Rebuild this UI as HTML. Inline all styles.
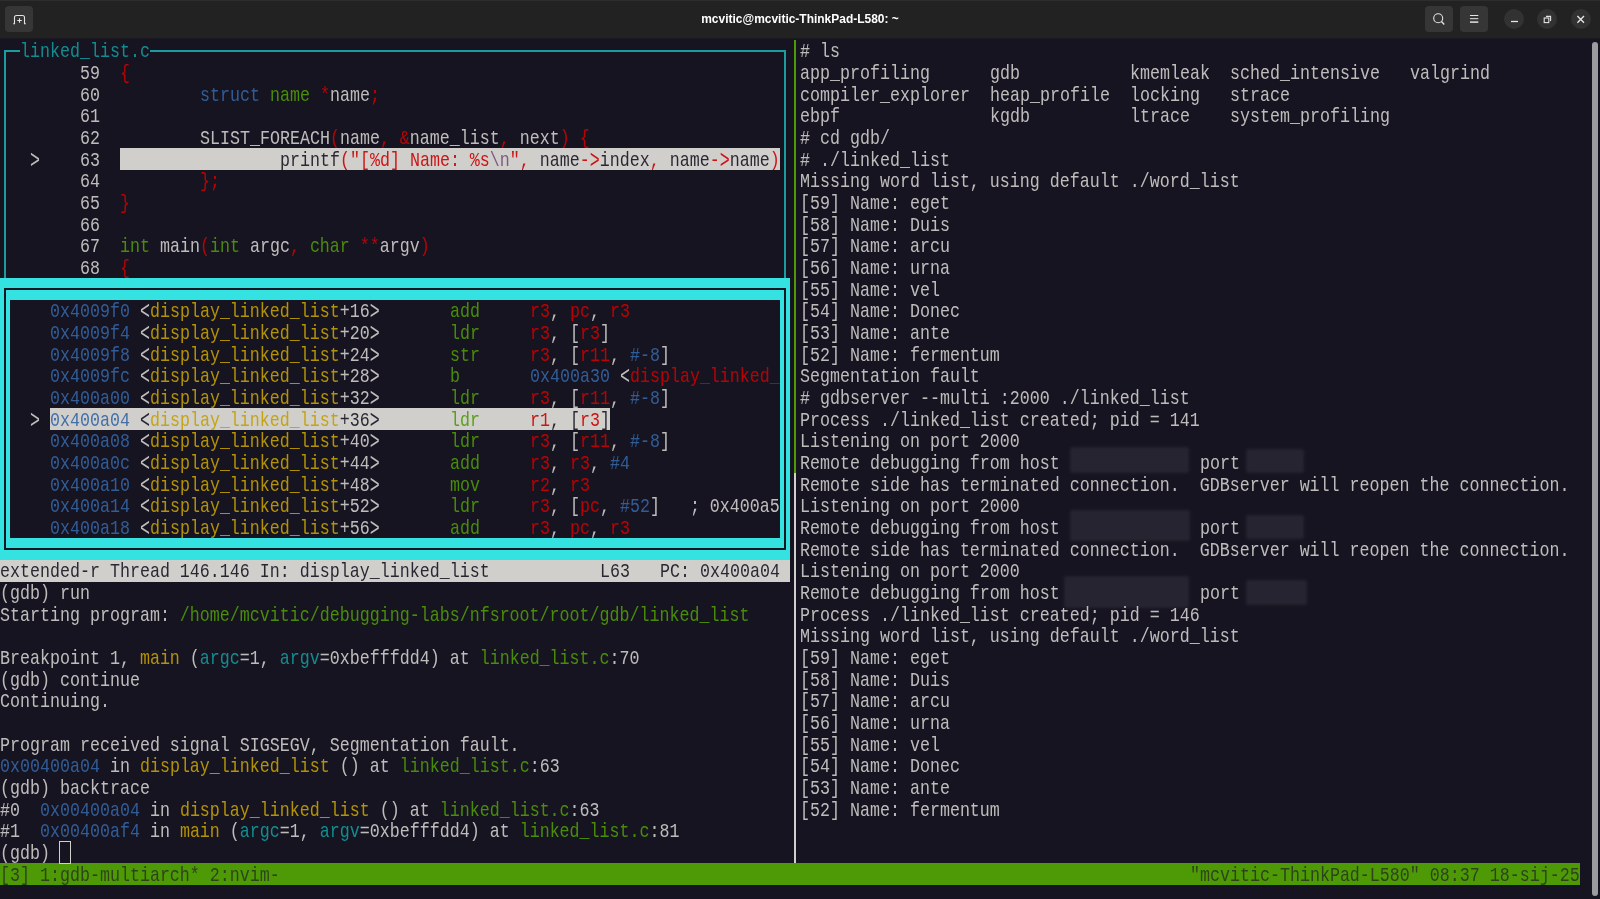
<!DOCTYPE html>
<html lang="en"><head><meta charset="utf-8"><title>mcvitic@mcvitic-ThinkPad-L580: ~</title>
<style>
html,body{margin:0;padding:0;width:1600px;height:899px;overflow:hidden;background:#171421}
body{position:relative;font-family:"Liberation Sans",sans-serif}
#tb{position:absolute;left:0;top:0;width:1600px;height:38px;background:#222222;border-top:1px solid #2d2d2d;box-sizing:border-box}
#ttl{position:absolute;left:0;top:-0.4px;width:1600px;height:38px;line-height:38px;text-align:center;color:#fff;font-weight:bold;font-size:12.7px;transform:scaleX(0.943)}
.btn{position:absolute;top:6px;height:26px;width:28px;border-radius:4px;background:#363636}
.cir{position:absolute;top:9px;width:20px;height:20px;border-radius:50%;background:#323232}
.ico{position:absolute;left:0;top:0}
.b{position:absolute}
#term{position:absolute;left:0;top:0;width:1933.755px;height:899px;transform-origin:0 0;transform:scale(0.827406,1.000000);font-family:"Liberation Mono", monospace;font-size:20.14px;color:#d0cfcc;opacity:.9}
.r{position:absolute;left:0;white-space:pre;height:21.6667px;line-height:21.6667px}
.ch{display:inline-block;transform:scaleY(1.3);transform-origin:50% 8.6px}
.blur{position:absolute;background:#282632;filter:blur(1.5px);border-radius:2px;opacity:.9}
</style></head><body>
<div id="tb"></div><div class="b" style="left:0;top:38px;width:1600px;height:1px;background:#1b1a20"></div>
<div id="ttl">mcvitic@mcvitic-ThinkPad-L580: ~</div>
<div class="btn" style="left:5px"></div>
<div class="btn" style="left:1425px"></div>
<div class="btn" style="left:1460px"></div>
<div class="cir" style="left:1504px"></div>
<div class="cir" style="left:1537px"></div>
<div class="cir" style="left:1571px"></div>
<svg class="ico" width="1600" height="38" viewBox="0 0 1600 38" fill="none" stroke="#e4e4e4" stroke-width="1.1">
<path d="M13.2 23.7h1.3v-6.2a2 2 0 0 1 2-2h6a2 2 0 0 1 2 2v6.2h1.3"/>
<path d="M19.5 18.2v4.6M17.2 20.5h4.6"/>
<circle cx="1438.2" cy="18.2" r="4.5" stroke-width="1.1"/><path d="M1441.5 21.5l2.7 2.9" stroke-width="1.4"/>
<path d="M1470 15.5h8.3M1470 18.7h8.3" stroke-width="1"/><path d="M1470 22.1h8.3" stroke-width="1.5"/>
<path d="M1511 21.5h7" stroke-width="1.3"/>
<rect x="1544.2" y="18" width="4.6" height="4.6" stroke-width="1.1"/><path d="M1546 16.4h4.6v4.6" stroke-width="1.1"/>
<path d="M1577.4 16.1l6.6 6.6M1584 16.1l-6.6 6.6" stroke-width="1.4"/>
</svg>
<div class="b" style="left:120px;top:148px;width:660px;height:22px;background:#d0cfcc"></div>
<div class="b" style="left:50px;top:408px;width:560px;height:22px;background:#d0cfcc"></div>
<div class="b" style="left:0px;top:560px;width:790px;height:22px;background:#d0cfcc"></div>
<div class="b" style="left:0px;top:863px;width:1580px;height:22px;background:#4e9a06"></div>
<div class="b" style="left:4px;top:50px;width:16px;height:2px;background:#1d9c9f"></div>
<div class="b" style="left:150px;top:50px;width:636px;height:2px;background:#1d9c9f"></div>
<div class="b" style="left:4px;top:50px;width:2px;height:228px;background:#1d9c9f"></div>
<div class="b" style="left:784px;top:50px;width:2px;height:228px;background:#1d9c9f"></div>
<div class="b" style="left:0;top:278px;width:790px;height:22px;background:#34e2e2"></div>
<div class="b" style="left:0;top:538px;width:790px;height:22px;background:#34e2e2"></div>
<div class="b" style="left:0;top:278px;width:10px;height:282px;background:#34e2e2"></div>
<div class="b" style="left:780px;top:278px;width:10px;height:282px;background:#34e2e2"></div>
<div class="b" style="left:4px;top:288px;width:782px;height:262px;border:2px solid #131722;box-sizing:border-box"></div>
<div class="b" style="left:794px;top:40px;width:2px;height:433px;background:#4e9a06"></div>
<div class="b" style="left:794.3px;top:473px;width:1.7px;height:390px;background:#d0cfcc"></div>
<div class="blur" style="left:1070px;top:447px;width:119px;height:26px"></div>
<div class="blur" style="left:1246px;top:449px;width:58px;height:24px"></div>
<div class="blur" style="left:1070px;top:510px;width:120px;height:31px"></div>
<div class="blur" style="left:1246px;top:515px;width:58px;height:24px"></div>
<div class="blur" style="left:1064px;top:576px;width:125px;height:32px"></div>
<div class="blur" style="left:1246px;top:580px;width:61px;height:25px"></div>
<div class="b" style="left:59px;top:841px;width:12px;height:23px;border:1px solid #d0cfcc;box-sizing:border-box"></div>
<div class="b" style="left:1592.4px;top:42px;width:5.4px;height:854px;border-radius:3px;background:#9c9ba0"></div>
<div id="term">
<div class="r" style="top:41.40px;left:24.172px"><span style="color:#129a9c">linked_list.c</span></div>
<div class="r" style="top:41.40px;left:966.877px"># ls</div>
<div class="r" style="top:63.07px;left:96.688px">59</div>
<div class="r" style="top:63.07px;left:145.032px"><span style="color:#cc0000">{</span></div>
<div class="r" style="top:63.07px;left:966.877px">app_profiling</div>
<div class="r" style="top:63.07px;left:1196.511px">gdb</div>
<div class="r" style="top:63.07px;left:1365.714px">kmemleak</div>
<div class="r" style="top:63.07px;left:1486.574px">sched_intensive</div>
<div class="r" style="top:63.07px;left:1704.121px">valgrind</div>
<div class="r" style="top:84.73px;left:96.688px">60</div>
<div class="r" style="top:84.73px;left:241.719px"><span style="color:#3465a4">struct</span> <span style="color:#4e9a06">name</span> <span style="color:#cc0000">*</span>name<span style="color:#cc0000">;</span></div>
<div class="r" style="top:84.73px;left:966.877px">compiler_explorer</div>
<div class="r" style="top:84.73px;left:1196.511px">heap_profile</div>
<div class="r" style="top:84.73px;left:1365.714px">locking</div>
<div class="r" style="top:84.73px;left:1486.574px">strace</div>
<div class="r" style="top:106.40px;left:96.688px">61</div>
<div class="r" style="top:106.40px;left:966.877px">ebpf</div>
<div class="r" style="top:106.40px;left:1196.511px">kgdb</div>
<div class="r" style="top:106.40px;left:1365.714px">ltrace</div>
<div class="r" style="top:106.40px;left:1486.574px">system_profiling</div>
<div class="r" style="top:128.07px;left:96.688px">62</div>
<div class="r" style="top:128.07px;left:241.719px">SLIST_FOREACH<span style="color:#cc0000">(</span>name<span style="color:#cc0000">,</span> <span style="color:#cc0000">&amp;</span>name_list<span style="color:#cc0000">,</span> next<span style="color:#cc0000">)</span> <span style="color:#cc0000">{</span></div>
<div class="r" style="top:128.07px;left:966.877px"># cd gdb/</div>
<div class="r" style="top:149.73px;left:96.688px">63</div>
<div class="r" style="top:149.73px;left:36.258px"><span class="ch">&gt;</span></div>
<div class="r" style="top:149.73px;left:338.407px"><span style="color:#171421">printf</span><span style="color:#cc0000">(</span><span style="color:#cc0000">"[%d] Name: %s</span><span style="color:#75507b">\n</span><span style="color:#cc0000">"</span><span style="color:#cc0000">,</span><span style="color:#171421"> name</span><span style="color:#cc0000">-<span class="ch">&gt;</span></span><span style="color:#171421">index</span><span style="color:#cc0000">,</span><span style="color:#171421"> name</span><span style="color:#cc0000">-<span class="ch">&gt;</span></span><span style="color:#171421">name</span><span style="color:#cc0000">)</span></div>
<div class="r" style="top:149.73px;left:966.877px"># ./linked_list</div>
<div class="r" style="top:171.40px;left:96.688px">64</div>
<div class="r" style="top:171.40px;left:241.719px"><span style="color:#cc0000">};</span></div>
<div class="r" style="top:171.40px;left:966.877px">Missing word list, using default ./word_list</div>
<div class="r" style="top:193.07px;left:96.688px">65</div>
<div class="r" style="top:193.07px;left:145.032px"><span style="color:#cc0000">}</span></div>
<div class="r" style="top:193.07px;left:966.877px">[59] Name: eget</div>
<div class="r" style="top:214.73px;left:96.688px">66</div>
<div class="r" style="top:214.73px;left:966.877px">[58] Name: Duis</div>
<div class="r" style="top:236.40px;left:96.688px">67</div>
<div class="r" style="top:236.40px;left:145.032px"><span style="color:#4e9a06">int</span> main<span style="color:#cc0000">(</span><span style="color:#4e9a06">int</span> argc<span style="color:#cc0000">,</span> <span style="color:#4e9a06">char</span> <span style="color:#cc0000">**</span>argv<span style="color:#cc0000">)</span></div>
<div class="r" style="top:236.40px;left:966.877px">[57] Name: arcu</div>
<div class="r" style="top:258.07px;left:96.688px">68</div>
<div class="r" style="top:258.07px;left:145.032px"><span style="color:#cc0000">{</span></div>
<div class="r" style="top:258.07px;left:966.877px">[56] Name: urna</div>
<div class="r" style="top:279.73px;left:966.877px">[55] Name: vel</div>
<div class="r" style="top:301.40px;left:60.430px"><span style="color:#3465a4">0x4009f0</span> <span class="ch">&lt;</span><span style="color:#c4a000">display_linked_list</span>+16<span class="ch">&gt;</span></div>
<div class="r" style="top:301.40px;left:543.869px"><span style="color:#4e9a06">add</span></div>
<div class="r" style="top:301.40px;left:640.556px"><span style="color:#cc0000">r3</span>, <span style="color:#cc0000">pc</span>, <span style="color:#cc0000">r3</span></div>
<div class="r" style="top:301.40px;left:966.877px">[54] Name: Donec</div>
<div class="r" style="top:323.07px;left:60.430px"><span style="color:#3465a4">0x4009f4</span> <span class="ch">&lt;</span><span style="color:#c4a000">display_linked_list</span>+20<span class="ch">&gt;</span></div>
<div class="r" style="top:323.07px;left:543.869px"><span style="color:#4e9a06">ldr</span></div>
<div class="r" style="top:323.07px;left:640.556px"><span style="color:#cc0000">r3</span>, [<span style="color:#cc0000">r3</span>]</div>
<div class="r" style="top:323.07px;left:966.877px">[53] Name: ante</div>
<div class="r" style="top:344.73px;left:60.430px"><span style="color:#3465a4">0x4009f8</span> <span class="ch">&lt;</span><span style="color:#c4a000">display_linked_list</span>+24<span class="ch">&gt;</span></div>
<div class="r" style="top:344.73px;left:543.869px"><span style="color:#4e9a06">str</span></div>
<div class="r" style="top:344.73px;left:640.556px"><span style="color:#cc0000">r3</span>, [<span style="color:#cc0000">r11</span>, <span style="color:#3465a4">#-8</span>]</div>
<div class="r" style="top:344.73px;left:966.877px">[52] Name: fermentum</div>
<div class="r" style="top:366.40px;left:60.430px"><span style="color:#3465a4">0x4009fc</span> <span class="ch">&lt;</span><span style="color:#c4a000">display_linked_list</span>+28<span class="ch">&gt;</span></div>
<div class="r" style="top:366.40px;left:543.869px"><span style="color:#4e9a06">b</span></div>
<div class="r" style="top:366.40px;left:640.556px"><span style="color:#3465a4">0x400a30</span> <span class="ch">&lt;</span><span style="color:#cc0000">display_linked_</span></div>
<div class="r" style="top:366.40px;left:966.877px">Segmentation fault</div>
<div class="r" style="top:388.07px;left:60.430px"><span style="color:#3465a4">0x400a00</span> <span class="ch">&lt;</span><span style="color:#c4a000">display_linked_list</span>+32<span class="ch">&gt;</span></div>
<div class="r" style="top:388.07px;left:543.869px"><span style="color:#4e9a06">ldr</span></div>
<div class="r" style="top:388.07px;left:640.556px"><span style="color:#cc0000">r3</span>, [<span style="color:#cc0000">r11</span>, <span style="color:#3465a4">#-8</span>]</div>
<div class="r" style="top:388.07px;left:966.877px"># gdbserver --multi :2000 ./linked_list</div>
<div class="r" style="top:409.73px;left:36.258px"><span class="ch">&gt;</span></div>
<div class="r" style="top:409.73px;left:60.430px"><span style="color:#3465a4">0x400a04</span><span style="color:#171421"> <span class="ch">&lt;</span></span><span style="color:#c4a000">display_linked_list</span><span style="color:#171421">+36<span class="ch">&gt;</span></span></div>
<div class="r" style="top:409.73px;left:543.869px"><span style="color:#4e9a06">ldr</span></div>
<div class="r" style="top:409.73px;left:640.556px"><span style="color:#cc0000">r1</span><span style="color:#171421">, [</span><span style="color:#cc0000">r3</span><span style="color:#171421">]</span></div>
<div class="r" style="top:409.73px;left:966.877px">Process ./linked_list created; pid = 141</div>
<div class="r" style="top:431.40px;left:60.430px"><span style="color:#3465a4">0x400a08</span> <span class="ch">&lt;</span><span style="color:#c4a000">display_linked_list</span>+40<span class="ch">&gt;</span></div>
<div class="r" style="top:431.40px;left:543.869px"><span style="color:#4e9a06">ldr</span></div>
<div class="r" style="top:431.40px;left:640.556px"><span style="color:#cc0000">r3</span>, [<span style="color:#cc0000">r11</span>, <span style="color:#3465a4">#-8</span>]</div>
<div class="r" style="top:431.40px;left:966.877px">Listening on port 2000</div>
<div class="r" style="top:453.07px;left:60.430px"><span style="color:#3465a4">0x400a0c</span> <span class="ch">&lt;</span><span style="color:#c4a000">display_linked_list</span>+44<span class="ch">&gt;</span></div>
<div class="r" style="top:453.07px;left:543.869px"><span style="color:#4e9a06">add</span></div>
<div class="r" style="top:453.07px;left:640.556px"><span style="color:#cc0000">r3</span>, <span style="color:#cc0000">r3</span>, <span style="color:#3465a4">#4</span></div>
<div class="r" style="top:453.07px;left:966.877px">Remote debugging from host</div>
<div class="r" style="top:453.07px;left:1450.316px">port</div>
<div class="r" style="top:474.73px;left:60.430px"><span style="color:#3465a4">0x400a10</span> <span class="ch">&lt;</span><span style="color:#c4a000">display_linked_list</span>+48<span class="ch">&gt;</span></div>
<div class="r" style="top:474.73px;left:543.869px"><span style="color:#4e9a06">mov</span></div>
<div class="r" style="top:474.73px;left:640.556px"><span style="color:#cc0000">r2</span>, <span style="color:#cc0000">r3</span></div>
<div class="r" style="top:474.73px;left:966.877px">Remote side has terminated connection.  GDBserver will reopen the connection.</div>
<div class="r" style="top:496.40px;left:60.430px"><span style="color:#3465a4">0x400a14</span> <span class="ch">&lt;</span><span style="color:#c4a000">display_linked_list</span>+52<span class="ch">&gt;</span></div>
<div class="r" style="top:496.40px;left:543.869px"><span style="color:#4e9a06">ldr</span></div>
<div class="r" style="top:496.40px;left:640.556px"><span style="color:#cc0000">r3</span>, [<span style="color:#cc0000">pc</span>, <span style="color:#3465a4">#52</span>]   ; 0x400a5</div>
<div class="r" style="top:496.40px;left:966.877px">Listening on port 2000</div>
<div class="r" style="top:518.07px;left:60.430px"><span style="color:#3465a4">0x400a18</span> <span class="ch">&lt;</span><span style="color:#c4a000">display_linked_list</span>+56<span class="ch">&gt;</span></div>
<div class="r" style="top:518.07px;left:543.869px"><span style="color:#4e9a06">add</span></div>
<div class="r" style="top:518.07px;left:640.556px"><span style="color:#cc0000">r3</span>, <span style="color:#cc0000">pc</span>, <span style="color:#cc0000">r3</span></div>
<div class="r" style="top:518.07px;left:966.877px">Remote debugging from host</div>
<div class="r" style="top:518.07px;left:1450.316px">port</div>
<div class="r" style="top:539.73px;left:966.877px">Remote side has terminated connection.  GDBserver will reopen the connection.</div>
<div class="r" style="top:561.40px;left:0.000px"><span style="color:#171421">extended-r Thread 146.146 In: display_linked_list</span></div>
<div class="r" style="top:561.40px;left:725.158px"><span style="color:#171421">L63</span></div>
<div class="r" style="top:561.40px;left:797.674px"><span style="color:#171421">PC: 0x400a04</span></div>
<div class="r" style="top:561.40px;left:966.877px">Listening on port 2000</div>
<div class="r" style="top:583.07px;left:0.000px">(gdb) run</div>
<div class="r" style="top:583.07px;left:966.877px">Remote debugging from host</div>
<div class="r" style="top:583.07px;left:1450.316px">port</div>
<div class="r" style="top:604.73px;left:0.000px">Starting program: <span style="color:#4e9a06">/home/mcvitic/debugging-labs/nfsroot/root/gdb/linked_list</span></div>
<div class="r" style="top:604.73px;left:966.877px">Process ./linked_list created; pid = 146</div>
<div class="r" style="top:626.40px;left:966.877px">Missing word list, using default ./word_list</div>
<div class="r" style="top:648.07px;left:0.000px">Breakpoint 1, <span style="color:#c4a000">main</span> (<span style="color:#129a9c">argc</span>=1, <span style="color:#129a9c">argv</span>=0xbefffdd4) at <span style="color:#4e9a06">linked_list.c</span>:70</div>
<div class="r" style="top:648.07px;left:966.877px">[59] Name: eget</div>
<div class="r" style="top:669.73px;left:0.000px">(gdb) continue</div>
<div class="r" style="top:669.73px;left:966.877px">[58] Name: Duis</div>
<div class="r" style="top:691.40px;left:0.000px">Continuing.</div>
<div class="r" style="top:691.40px;left:966.877px">[57] Name: arcu</div>
<div class="r" style="top:713.07px;left:966.877px">[56] Name: urna</div>
<div class="r" style="top:734.73px;left:0.000px">Program received signal SIGSEGV, Segmentation fault.</div>
<div class="r" style="top:734.73px;left:966.877px">[55] Name: vel</div>
<div class="r" style="top:756.40px;left:0.000px"><span style="color:#3465a4">0x00400a04</span> in <span style="color:#c4a000">display_linked_list</span> () at <span style="color:#4e9a06">linked_list.c</span>:63</div>
<div class="r" style="top:756.40px;left:966.877px">[54] Name: Donec</div>
<div class="r" style="top:778.07px;left:0.000px">(gdb) backtrace</div>
<div class="r" style="top:778.07px;left:966.877px">[53] Name: ante</div>
<div class="r" style="top:799.73px;left:0.000px">#0  <span style="color:#3465a4">0x00400a04</span> in <span style="color:#c4a000">display_linked_list</span> () at <span style="color:#4e9a06">linked_list.c</span>:63</div>
<div class="r" style="top:799.73px;left:966.877px">[52] Name: fermentum</div>
<div class="r" style="top:821.40px;left:0.000px">#1  <span style="color:#3465a4">0x00400af4</span> in <span style="color:#c4a000">main</span> (<span style="color:#129a9c">argc</span>=1, <span style="color:#129a9c">argv</span>=0xbefffdd4) at <span style="color:#4e9a06">linked_list.c</span>:81</div>
<div class="r" style="top:843.07px;left:0.000px">(gdb) </div>
<div class="r" style="top:864.73px;left:0.000px"><span style="color:#2b3a1e">[3] 1:gdb-multiarch* 2:nvim-</span></div>
<div class="r" style="top:864.73px;left:1438.230px"><span style="color:#2b3a1e">"mcvitic-ThinkPad-L580" 08:37 18-sij-25</span></div>
</div>
</body></html>
